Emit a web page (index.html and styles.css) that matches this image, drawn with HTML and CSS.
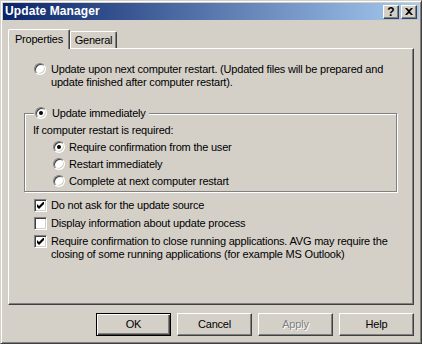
FILE: index.html
```html
<!DOCTYPE html>
<html lang="en">
<head>
    <meta charset="UTF-8">
    <title>Update Manager</title>
    <link rel="stylesheet" href="styles.css">
</head>
<body>

<div class="window">
    <div class="titlebar">
        <span class="title">Update Manager</span>
        <div class="title-buttons">
            <span class="tb-btn help">?</span>
            <span class="tb-btn">
                <svg width="8" height="7" viewBox="0 0 8 7"><path d="M0 0h2l2 2 2-2h2L5 3.5 8 7H6L4 5 2 7H0l3-3.5z" fill="#000"/></svg>
            </span>
        </div>
    </div>

    <div class="client">
        <div class="tabs">
            <div class="tab active">Properties</div>
            <div class="tab">General</div>
        </div>

        <div class="panel">
            <!-- Вариант 1 -->
            <div class="row first-option">
                <span class="radio"></span>
                <span class="label">Update upon next computer restart. (Updated files will be prepared and<br>update finished after computer restart).</span>
            </div>

            <!-- Вариант 2 -->
            <div class="group">
                <div class="legend">
                    <span class="radio checked"></span>
                    <span class="label">Update immediately</span>
                </div>
                <div class="note">If computer restart is required:</div>
                <div class="sub-options">
                    <div class="row">
                        <span class="radio checked"></span>
                        <span class="label">Require confirmation from the user</span>
                    </div>
                    <div class="row">
                        <span class="radio"></span>
                        <span class="label">Restart immediately</span>
                    </div>
                    <div class="row">
                        <span class="radio"></span>
                        <span class="label">Complete at next computer restart</span>
                    </div>
                </div>
            </div>

            <div class="checks">
                <div class="row">
                    <span class="check checked"><svg width="7" height="7" viewBox="0 0 7 7"><path d="M0 2v3l2 2 5-5V-1L2 4z" fill="#000"/></svg></span>
                    <span class="label">Do not ask for the update source</span>
                </div>
                <div class="row">
                    <span class="check"></span>
                    <span class="label">Display information about update process</span>
                </div>
                <div class="row">
                    <span class="check checked"><svg width="7" height="7" viewBox="0 0 7 7"><path d="M0 2v3l2 2 5-5V-1L2 4z" fill="#000"/></svg></span>
                    <span class="label">Require confirmation to close running applications. AVG may require the<br>closing of some running applications (for example MS Outlook)</span>
                </div>
            </div>
        </div>

        <div class="buttons">
            <span class="btn default">OK</span>
            <span class="btn">Cancel</span>
            <span class="btn disabled">Apply</span>
            <span class="btn">Help</span>
        </div>
    </div>
</div>

</body>
</html>
```

FILE: styles.css
```css
/* Общие стили */
* {
    margin: 0;
    padding: 0;
    box-sizing: border-box;
}

body {
    font-family: 'Liberation Sans', Arial, sans-serif;
    font-size: 11px;
    line-height: 13px;
    letter-spacing: -0.2px;
    color: #000;
    background: #d4d0c8;
}

.window {
    width: 422px;
    height: 344px;
    border: 1px solid;
    border-color: #d4d0c8 #404040 #404040 #d4d0c8;
    box-shadow: inset 1px 1px #fff, inset -1px -1px #808080;
    padding: 2px;
    background: #d4d0c8;
    display: flex;
    flex-direction: column;
}

/* Заголовок окна */
.titlebar {
    height: 18px;
    background: linear-gradient(to right, #0a246a, #a6caf0);
    display: flex;
    align-items: center;
    justify-content: space-between;
    padding: 0 2px 0 2px;
}

.title {
    color: #fff;
    font-weight: bold;
    font-size: 12px;
    letter-spacing: 0.1px;
}

.title-buttons {
    display: flex;
    gap: 2px;
}

.tb-btn {
    width: 16px;
    height: 14px;
    background: #d4d0c8;
    border: 1px solid;
    border-color: #fff #404040 #404040 #fff;
    box-shadow: inset -1px -1px #808080;
    display: flex;
    align-items: center;
    justify-content: center;
    font-weight: bold;
    font-size: 12px;
    line-height: 12px;
    letter-spacing: 0;
}

/* Вкладки */
.client {
    flex: 1;
    display: flex;
    flex-direction: column;
    padding: 8px 5px 5px 5px;
}

.tabs {
    display: flex;
    align-items: flex-end;
    height: 20px;
    position: relative;
    z-index: 2;
}

.tab {
    height: 17px;
    width: 47px;
    border: 1px solid;
    border-bottom: none;
    border-color: #fff #404040 #404040 #fff;
    box-shadow: inset -1px 0 #808080;
    border-radius: 2px 2px 0 0;
    text-align: center;
    padding-top: 2px;
    background: #d4d0c8;
}

.tab.active {
    height: 20px;
    width: 62px;
    margin-bottom: -1px;
    padding-top: 3px;
}

.panel {
    height: 257px;
    border: 1px solid;
    border-color: #fff #404040 #404040 #fff;
    box-shadow: inset -1px -1px #808080;
}

.row {
    display: flex;
    align-items: flex-start;
    gap: 5px;
}

.label {
    white-space: nowrap;
}

.first-option {
    margin: 14px 0 0 25px;
}

/* Переключатели */
.radio {
    flex: none;
    width: 12px;
    height: 12px;
    border-radius: 50%;
    border: 1px solid;
    border-color: #808080 #fff #fff #808080;
    background: #fff;
    box-shadow: inset 1px 1px #404040, inset -1px -1px #d4d0c8;
    position: relative;
}

.radio.checked::after {
    content: "";
    position: absolute;
    left: 3px;
    top: 3px;
    width: 4px;
    height: 4px;
    border-radius: 50%;
    background: #000;
}

.check {
    flex: none;
    width: 13px;
    height: 13px;
    border: 1px solid;
    border-color: #808080 #fff #fff #808080;
    background: #fff;
    box-shadow: inset 1px 1px #404040, inset -1px -1px #d4d0c8;
    display: flex;
    align-items: center;
    justify-content: center;
}

.check svg {
    display: block;
}

/* Группа */
.group {
    position: relative;
    width: 373px;
    margin: 24px 0 0 15px;
    border: 1px solid #808080;
    box-shadow: inset 1px 1px #fff, 1px 1px #fff;
    padding: 10px 0 3px 8px;
}

.legend {
    position: absolute;
    left: 9px;
    top: -7px;
    display: flex;
    gap: 5px;
    padding: 0 3px 0 1px;
    background: #d4d0c8;
}

.sub-options {
    margin: 4px 0 0 20px;
    display: flex;
    flex-direction: column;
    gap: 4px;
}

.sub-options .row {
    gap: 4px;
}

.checks {
    margin: 7px 0 0 25px;
    display: flex;
    flex-direction: column;
    gap: 5px;
}

.checks .row {
    gap: 4px;
}

/* Кнопки */
.buttons {
    display: flex;
    justify-content: flex-end;
    gap: 6px;
    margin-top: 8px;
}

.btn {
    width: 75px;
    height: 23px;
    border: 1px solid;
    border-color: #fff #404040 #404040 #fff;
    box-shadow: inset -1px -1px #808080;
    display: flex;
    align-items: center;
    justify-content: center;
}

.btn.default {
    border: 1px solid #000;
    box-shadow: inset 1px 1px #fff, inset -1px -1px #404040, inset -2px -2px #808080;
}

.btn.disabled {
    color: #808080;
    text-shadow: 1px 1px #fff;
}
```
